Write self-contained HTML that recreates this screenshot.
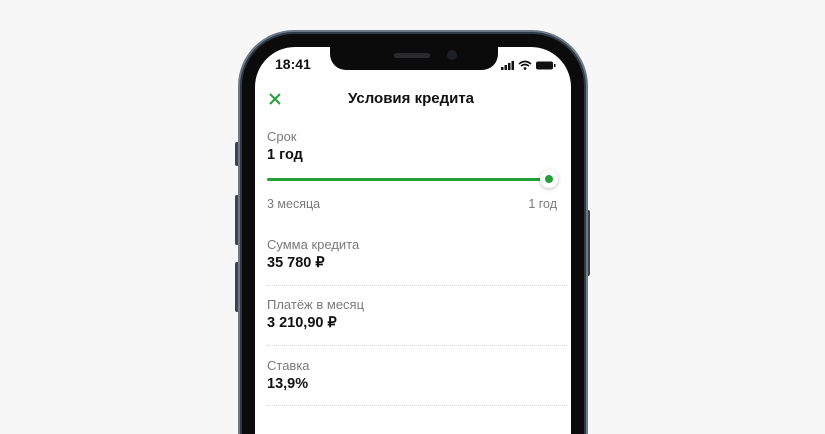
<!DOCTYPE html>
<html style="width:825px;height:434px;overflow:hidden"><head><meta charset="utf-8"><style>
*{margin:0;padding:0;box-sizing:border-box}
body{width:825px;height:434px;background:#f7f7f7;position:relative;overflow:hidden;font-family:"Liberation Sans",sans-serif}
.btn{position:absolute;background:#3a4550;border-radius:2px;width:4px}
.frame{position:absolute;left:238px;top:30px;width:350px;height:404px;border-radius:56px 56px 0 0;background:#2e3a46;border:2px solid #6e7a86;border-bottom:none}
.bezel{position:absolute;left:242px;top:34px;width:342px;height:400px;border-radius:52px 52px 0 0;background:#0b0b0c}
.screen{position:absolute;left:255px;top:47px;width:316px;height:387px;border-radius:40px 40px 0 0;background:#fff;overflow:hidden}
.notch{position:absolute;left:75px;top:0;width:168px;height:23px;background:#0b0b0c;border-radius:0 0 16px 16px}
.t{position:absolute;white-space:nowrap}
.lab{color:#7a7a7a;font-size:13px}
.val{color:#111;font-size:14.5px;font-weight:bold}
.div{position:absolute;left:12px;width:300px;border-top:1px dotted #d6d6d6}
</style></head><body>
<div class="btn" style="left:235px;top:142px;height:24px"></div>
<div class="btn" style="left:235px;top:195px;height:50px"></div>
<div class="btn" style="left:235px;top:262px;height:50px"></div>
<div class="btn" style="left:586px;top:210px;height:66px"></div>
<div class="frame"></div>
<div class="bezel"></div>
<div class="screen">
  <div class="notch">
    <div style="position:absolute;left:64px;top:6px;width:36px;height:5px;border-radius:3px;background:#2a2a2e"></div>
    <div style="position:absolute;left:117px;top:3px;width:10px;height:10px;border-radius:50%;background:#1c1f2a"></div>
  </div>
  <div class="t" style="left:20px;top:9px;font-size:14px;font-weight:bold;color:#111">18:41</div>
  <svg style="position:absolute;left:246px;top:13px" width="60" height="11">
    <rect x="0" y="7" width="2.5" height="3" fill="#111"/><rect x="3.5" y="5" width="2.5" height="5" fill="#111"/><rect x="7" y="3" width="2.5" height="7" fill="#111"/><rect x="10.5" y="1" width="2.5" height="9" fill="#111"/>
    <path d="M18 4 Q24 -1 30 4 M20 6 Q24 3 28 6" stroke="#111" stroke-width="1.6" fill="none"/><circle cx="24" cy="8.5" r="1.4" fill="#111"/>
    <rect x="35" y="1.5" width="17" height="8" rx="2" fill="#111"/><rect x="53" y="4" width="1.5" height="3" fill="#111"/>
  </svg>
  <svg style="position:absolute;left:13px;top:45px" width="14" height="14"><path d="M2 2L12 12M12 2L2 12" stroke="#21a038" stroke-width="2"/></svg>
  <div class="t" style="left:0;width:312px;text-align:center;top:43px;font-size:15px;font-weight:bold;color:#111">Условия кредита</div>
  <div class="t lab" style="left:12px;top:82px">Срок</div>
  <div class="t val" style="left:12px;top:100px">1 год</div>
  <div style="position:absolute;left:12px;top:131px;width:283px;height:3px;background:#21a038;border-radius:2px"></div>
  <div style="position:absolute;left:285px;top:123px;width:18px;height:18px;border-radius:50%;background:#fff;box-shadow:0 1px 4px rgba(0,0,0,.25)"></div>
  <div style="position:absolute;left:290px;top:128px;width:8px;height:8px;border-radius:50%;background:#21a038"></div>
  <div class="t lab" style="left:12px;top:150px;font-size:12.5px">3 месяца</div>
  <div class="t lab" style="right:14px;top:150px;font-size:12.5px">1 год</div>
  <div class="t lab" style="left:12px;top:190px">Сумма кредита</div>
  <div class="t val" style="left:12px;top:208px">35 780 ₽</div>
  <div class="div" style="top:238px"></div>
  <div class="t lab" style="left:12px;top:250px">Платёж в месяц</div>
  <div class="t val" style="left:12px;top:268px">3 210,90 ₽</div>
  <div class="div" style="top:298px"></div>
  <div class="t lab" style="left:12px;top:311px">Ставка</div>
  <div class="t val" style="left:12px;top:329px">13,9%</div>
  <div class="div" style="top:358px"></div>
</div>
</body></html>
